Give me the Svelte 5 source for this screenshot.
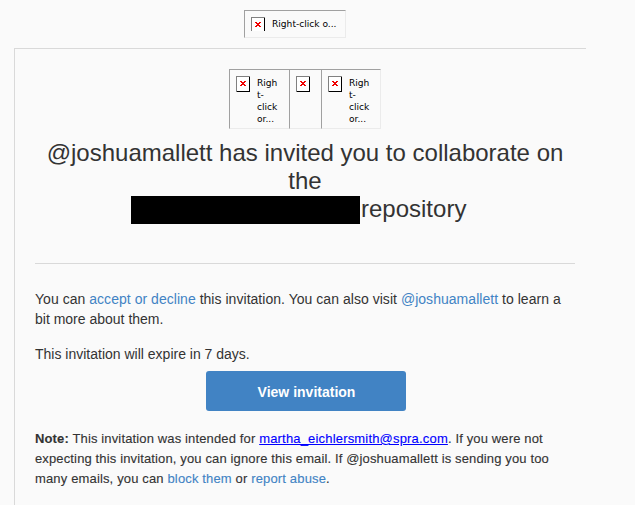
<script>
  const thumbs = [
    { kind: 'wide', lines: ['Righ', 't-', 'click', 'or...'] },
    { kind: 'narrow', lines: [] },
    { kind: 'last', lines: ['Righ', 't-', 'click', 'or...'] }
  ];
</script>

{#snippet broken(h)}
  <svg class="broken" width="14" height={h} viewBox="0 0 14 {h}" shape-rendering="crispEdges" aria-hidden="true">
    <rect width="14" height={h} fill="#808080" />
    <rect x="1" y="1" width="13" height={h - 1} fill="#000" />
    <rect x="1" y="1" width="12" height={h === 14 ? 13 : h - 2} fill="#fff" />
    <path d="M4 5h2v1h2v-1h2v1h-1v1h-1v1h1v1h1v1h-2v-1h-2v1h-2v-1h1v-1h1v-1h-1v-1h-1z" fill="#f00000" />
  </svg>
{/snippet}

<div class="page">
  <div class="logo">
    {@render broken(14)}
    <div class="lines"><span class="alt">Right-click o...</span></div>
  </div>
  <main>
    <div class="thumbs">
      {#each thumbs as t}
        <div class="thumb {t.kind}">
          {@render broken(16)}
          <div class="lines">
            {#each t.lines as line}<span class="alt">{line}</span>{/each}
          </div>
        </div>
      {/each}
    </div>
    <h1>
      <span>@joshuamallett has invited you to collaborate on</span>
      <span>the</span>
      <span class="repo"><i class="redacted"></i>repository</span>
    </h1>
    <hr />
    <p class="body">
      <span class="b1">You can <a href="#accept">accept or decline</a> this invitation. You can also visit <a href="#user">@joshuamallett</a> to learn a</span>
      <span>bit more about them.</span>
    </p>
    <p class="body expire">This invitation will expire in 7 days.</p>
    <a class="button" href="#view">View invitation</a>
    <p class="note">
      <span class="n1"><b>Note:</b> This invitation was intended for <a class="mail" href="#mail">martha_eichlersmith@spra.com</a>. If you were not</span>
      <span class="n2">expecting this invitation, you can ignore this email. If @joshuamallett is sending you too</span>
      <span class="n3">many emails, you can <a href="#block">block them</a> or <a href="#report">report abuse</a>.</span>
    </p>
  </main>
</div>

<style>
  :global(body) { margin: 0; background: #fafafa; }
  .page {
    box-sizing: border-box;
    width: 635px;
    height: 505px;
    padding: 10px 0 0 14px;
    overflow: hidden;
    background: #fafafa;
    color: #333;
    font-family: "Liberation Sans", Arial, sans-serif;
  }
  .logo, .thumb {
    box-sizing: border-box;
    display: flex;
    border: 1px solid #a0a0a0;
    border-right-color: #ebebeb;
    border-bottom-color: #ebebeb;
    padding: 6px;
  }
  .logo { width: 102px; height: 28px; margin-left: 230px; gap: 7px; }
  .broken { flex: none; display: block; }
  .lines { padding-top: 1px; }
  .alt {
    display: block;
    padding-top: 1px;
    font: 9.1px/11px "DejaVu Sans", sans-serif;
    color: #000;
    white-space: nowrap;
  }
  main {
    box-sizing: border-box;
    width: 572px;
    height: 480px;
    margin-top: 10px;
    padding: 20px 10px 0 20px;
    border-top: 1px solid #d9d9d9;
    border-left: 1px solid #d9d9d9;
  }
  .thumbs { display: flex; margin-left: 194px; }
  .thumb { width: 60px; height: 60px; gap: 7px; }
  .thumb.narrow { width: 32px; }
  .thumb.wide, .thumb.narrow { border-right: 0; }
  h1 {
    margin: 10px 0 0;
    width: 540px;
    font-size: 24px;
    line-height: 28px;
    font-weight: 400;
  }
  h1 span { display: block; text-align: center; white-space: nowrap; }
  h1 .repo { display: flex; padding-left: 96px; }
  .redacted { width: 229px; height: 28px; margin: 1px 1px -1px 0; background: #000; }
  hr { width: 540px; height: 1px; margin: 40px 0 25px; border: 0; background: #d9d9d9; }
  p { margin: 0; }
  p span { display: block; white-space: nowrap; }
  .body { font-size: 14px; line-height: 20px; }
  .b1 { letter-spacing: 0.035px; }
  .expire { margin-top: 15px; }
  a { color: #4183c4; text-decoration: none; }
  .button {
    box-sizing: border-box;
    display: block;
    width: 200px;
    height: 40px;
    margin: 7px 0 0 171px;
    padding-left: 1px;
    border-radius: 3px;
    background: #4183c4;
    color: #fff;
    font-size: 14px;
    line-height: 42px;
    font-weight: 700;
    text-align: center;
  }
  .note { margin-top: 18px; font-size: 13px; line-height: 20px; -webkit-text-stroke: 0.12px; }
  .n1 { letter-spacing: 0.14px; }
  .n2 { letter-spacing: 0.136px; }
  .n3 { letter-spacing: 0.15px; }
  .mail { color: #00f; text-decoration: underline; letter-spacing: 0.18px; }
</style>
